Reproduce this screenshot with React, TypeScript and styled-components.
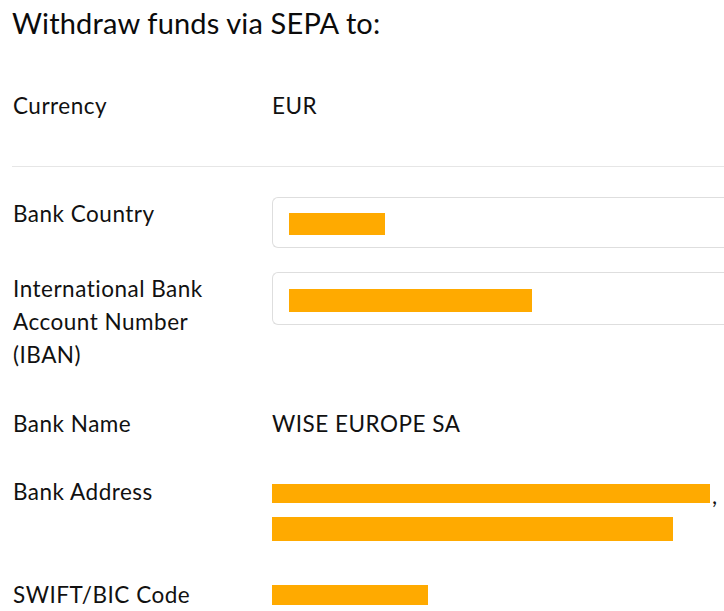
import styled, { createGlobalStyle } from 'styled-components';

const GlobalStyle = createGlobalStyle`
  html, body {
    margin: 0;
    padding: 0;
    background: #ffffff;
  }

  body {
    font-family: Lato, "Liberation Sans", sans-serif;
    color: #111111;
    overflow: hidden;
  }
`;

const Page = styled.main`
  width: 724px;
  height: 611px;
  box-sizing: border-box;
  padding: 5px 0 0 12px;
  overflow: hidden;
`;

const Heading = styled.h1`
  margin: 0 0 49px;
  font-size: 29px;
  line-height: 35px;
  font-weight: 400;
  letter-spacing: 0.15px;
  color: #0b0b0b;
`;

const Row = styled.div<{ $gap?: number }>`
  display: grid;
  grid-template-columns: 260px 1fr;
  align-items: start;
  margin-bottom: ${(p) => p.$gap ?? 36}px;
  font-size: 22.5px;
  line-height: 33px;
  letter-spacing: 0.5px;
`;

const Label = styled.div`
  padding-left: 1px;
  max-width: 215px;
`;

const Value = styled.div`
  white-space: nowrap;
`;

const Divider = styled.hr`
  margin: 0 0 30px;
  border: 0;
  border-top: 1px solid #e6e6e6;
`;

const Field = styled.div<{ $h: number }>`
  display: flex;
  align-items: center;
  height: ${(p) => p.$h}px;
  box-sizing: border-box;
  padding: 3px 16px 0;
  border: 1px solid #dedede;
  border-right: 0;
  border-radius: 6px 0 0 6px;
`;

const Redacted = styled.span<{ $w: number; $h?: number }>`
  display: inline-block;
  width: ${(p) => p.$w}px;
  height: ${(p) => p.$h ?? 20}px;
  background: #ffaa00;
`;

const Line = styled.div<{ $h: number }>`
  display: flex;
  align-items: center;
  height: ${(p) => p.$h}px;
`;

const Comma = styled.span`
  margin: 6px 0 0 2px;
  line-height: 1;
`;

const App = () => (
  <>
    <GlobalStyle />
    <Page>
      <Heading>Withdraw funds via SEPA to:</Heading>

      <Row $gap={44}>
        <Label>Currency</Label>
        <Value>EUR</Value>
      </Row>

      <Divider />

      <Row $gap={24}>
        <Label>Bank Country</Label>
        <Field $h={51}>
          <Redacted $w={96} $h={22} />
        </Field>
      </Row>

      <Row>
        <Label>International Bank Account Number (IBAN)</Label>
        <Field $h={53}>
          <Redacted $w={243} $h={23} />
        </Field>
      </Row>

      <Row $gap={35}>
        <Label>Bank Name</Label>
        <Value>WISE EUROPE SA</Value>
      </Row>

      <Row $gap={31}>
        <Label>Bank Address</Label>
        <Value>
          <Line $h={36}>
            <Redacted $w={438} $h={19} />
            <Comma>,</Comma>
          </Line>
          <Line $h={36}>
            <Redacted $w={401} $h={24} />
          </Line>
        </Value>
      </Row>

      <Row $gap={0}>
        <Label>SWIFT/BIC Code</Label>
        <Value>
          <Line $h={33}>
            <Redacted $w={156} $h={20} />
          </Line>
        </Value>
      </Row>
    </Page>
  </>
);

export default App;
